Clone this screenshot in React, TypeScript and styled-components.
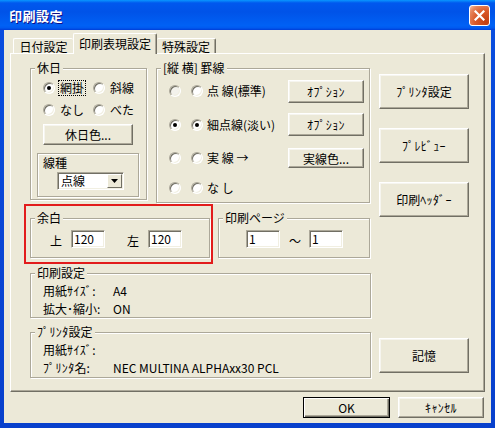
import React from 'react';
import styled, { createGlobalStyle } from 'styled-components';

const Global = createGlobalStyle`
  html, body { margin: 0; padding: 0; background: #fff; }
  body { font-family: "Noto Sans CJK JP", "Noto Sans", sans-serif; font-size: 12px; color: #000; }
  * { box-sizing: border-box; }
`;

const FACE = '#ECE9D8';

const Window = styled.div`
  width: 495px;
  height: 428px;
  display: flex;
  flex-direction: column;
  background: linear-gradient(180deg, #0A4EE0, #0840CC);
`;

const TitleBar = styled.div`
  height: 30px;
  flex: none;
  display: flex;
  align-items: center;
  padding: 0 5px 0 9px;
  background: linear-gradient(180deg, #0997ff 0%, #0058ee 10%, #0053e8 40%, #0061f5 85%, #005af0 93%, #003dd7 100%);
`;

const Title = styled.div`
  flex: 1;
  color: #fff;
  font-weight: bold;
  font-size: 13px;
  letter-spacing: 0.5px;
  text-shadow: 1px 1px 0 #0f1089;
`;

const CloseBtn = styled.div`
  width: 21px;
  height: 21px;
  border: 1px solid #fff;
  border-radius: 3px;
  display: flex;
  align-items: center;
  justify-content: center;
  background: radial-gradient(circle at 85% 85%, #c23e10 0%, #da5a2a 50%, #e6865e 80%, #f7c3a8 100%);
`;

const Client = styled.div`
  flex: 1;
  margin: 0 4px 5px 4px;
  background: ${FACE};
  display: flex;
  flex-direction: column;
  padding-top: 3px;
`;

const TabStrip = styled.div`
  display: flex;
  align-items: flex-end;
  height: 20px;
  padding-left: 9px;
`;

const Tab = styled.div<{ $w: number; $active?: boolean; $first?: boolean; $last?: boolean }>`
  width: ${p => p.$w}px;
  height: ${p => (p.$active ? 21 : 15)}px;
  margin-bottom: ${p => (p.$active ? -1 : 0)}px;
  position: relative;
  z-index: ${p => (p.$active ? 1 : 0)};
  background: ${FACE};
  display: flex;
  align-items: center;
  justify-content: center;
  padding-top: ${p => (p.$active ? 0 : 1)}px;
  padding-bottom: ${p => (p.$active ? 2 : 0)}px;
  border-top: 1px solid #fff;
  border-left: ${p => (p.$active || p.$first ? '1px solid #fff' : 'none')};
  border-right: ${p => (p.$active || p.$last ? '1px solid #716F64' : 'none')};
  box-shadow: ${p => (p.$active || p.$last ? 'inset -1px 0 0 #ACA899' : 'none')};
  border-radius: 2px 2px 0 0;
  white-space: nowrap;
`;

const Panel = styled.div`
  margin-left: 6px;
  width: 475px;
  height: 339px;
  flex: none;
  border-top: 1px solid #fff;
  border-left: 1px solid #fff;
  border-right: 1px solid #716F64;
  border-bottom: 1px solid #716F64;
  box-shadow: inset -1px -1px 0 #ACA899;
  display: flex;
  padding: 14px 0 0 13px;
`;

const LeftCol = styled.div`
  width: 347px;
  display: flex;
  flex-direction: column;
`;

const RightCol = styled.div`
  margin-left: 8px;
  width: 90px;
  display: flex;
  flex-direction: column;
  padding-top: 6px;
`;

const Row = styled.div<{ $mt?: number }>`
  display: flex;
  align-items: flex-start;
  margin-top: ${p => p.$mt ?? 0}px;
`;

const Group = styled.div<{ $w: number; $h: number; $ml?: number; $mt?: number; $pad?: string }>`
  position: relative;
  width: ${p => p.$w}px;
  height: ${p => p.$h}px;
  margin-left: ${p => p.$ml ?? 0}px;
  margin-top: ${p => p.$mt ?? 0}px;
  padding: ${p => p.$pad ?? '0'};
  border: 1px solid #ACA899;
  box-shadow: 1px 1px 0 #fff, inset 1px 1px 0 #fff;
  flex: none;
`;

const Legend = styled.span`
  position: absolute;
  top: -8px;
  left: 4px;
  padding: 0 2px;
  line-height: 14px;
  background: ${FACE};
  white-space: nowrap;
`;

const Hw = styled.span`
  letter-spacing: 0.4px;
`;

const Inner = styled.div`
  padding-left: 6px;
`;

const RadioRow = styled.div<{ $mt?: number }>`
  display: flex;
  align-items: center;
  height: 16px;
  margin-top: ${p => p.$mt ?? 0}px;
`;

const RadioItem = styled.div`
  width: 50px;
  display: flex;
  align-items: center;
  gap: 4px;
`;

const RadioCircle = styled.span<{ $checked?: boolean; $dim?: boolean; $ml?: number }>`
  width: 12px;
  height: 12px;
  flex: none;
  position: relative;
  margin-left: ${p => p.$ml ?? 0}px;
  border-radius: 50%;
  background: ${p => (p.$dim ? '#f3f2ec' : '#fff')};
  border: 1px solid;
  border-color: #ACA899 #fff #fff #ACA899;
  box-shadow: inset 1px 1px 0 #716F64, inset -1px -1px 0 #F1EFE2;
  &::after {
    content: '';
    display: ${p => (p.$checked ? 'block' : 'none')};
    position: absolute;
    left: 3px;
    top: 3px;
    width: 4px;
    height: 4px;
    border-radius: 50%;
    background: #000;
  }
`;

const RadioLabel = styled.span<{ $focus?: boolean }>`
  padding: 0 1px;
  line-height: 14px;
  white-space: nowrap;
  outline: ${p => (p.$focus ? '1px dotted #000' : 'none')};
`;

const Btn = styled.div<{ $w: number; $h: number; $mt?: number; $ml?: number; $default?: boolean }>`
  width: ${p => p.$w}px;
  height: ${p => p.$h}px;
  margin-top: ${p => p.$mt ?? 0}px;
  margin-left: ${p => p.$ml ?? 0}px;
  flex: none;
  background: ${FACE};
  display: flex;
  align-items: center;
  justify-content: center;
  white-space: nowrap;
  border: 1px solid;
  border-color: ${p => (p.$default ? '#000' : '#fff #716F64 #716F64 #fff')};
  box-shadow: ${p =>
    p.$default
      ? 'inset 1px 1px 0 #fff, inset -1px -1px 0 #716F64, inset -2px -2px 0 #ACA899'
      : 'inset -1px -1px 0 #ACA899, inset 1px 1px 0 #F6F5EF'};
`;

const LineTypeBox = styled.div`
  width: 102px;
  height: 44px;
  margin-top: 8px;
  padding: 2px 0 0 5px;
  border: 1px solid #ACA899;
  box-shadow: 1px 1px 0 #fff, inset 1px 1px 0 #fff;
`;

const BoxLabel = styled.div`
  line-height: 14px;
`;

const Combo = styled.div`
  width: 67px;
  height: 18px;
  margin: 2px 0 0 14px;
  display: flex;
  align-items: stretch;
  background: #fff;
  border: 1px solid;
  border-color: #ACA899 #fff #fff #ACA899;
  box-shadow: inset 1px 1px 0 #716F64, inset -1px -1px 0 #F1EFE2;
  padding: 1px;
`;

const ComboText = styled.span`
  flex: 1;
  padding-left: 2px;
  line-height: 14px;
`;

const DropBtn = styled.span`
  width: 15px;
  flex: none;
  background: ${FACE};
  display: flex;
  align-items: center;
  justify-content: center;
  border: 1px solid;
  border-color: #fff #716F64 #716F64 #fff;
`;

const KRow = styled.div<{ $h: number; $mt?: number }>`
  display: flex;
  align-items: center;
  height: ${p => p.$h}px;
  margin-top: ${p => p.$mt ?? 0}px;
`;

const KLabel = styled.span`
  flex: 1;
  margin-left: 4px;
  white-space: nowrap;
  line-height: 14px;
`;

const RedBox = styled.div`
  width: 189px;
  height: 60px;
  flex: none;
  border: 2px solid #E21C1C;
  padding: 12px 0 0 4px;
`;

const FieldRow = styled.div`
  display: flex;
  align-items: center;
  height: 18px;
`;

const FieldLabel = styled.span<{ $ml?: number }>`
  margin-left: ${p => p.$ml ?? 0}px;
  margin-right: 9px;
  line-height: 14px;
  padding-top: 3px;
`;

const TextBox = styled.div<{ $ml?: number }>`
  width: 34px;
  height: 18px;
  flex: none;
  margin-left: ${p => p.$ml ?? 0}px;
  background: #fff;
  border: 1px solid;
  border-color: #ACA899 #fff #fff #ACA899;
  box-shadow: inset 1px 1px 0 #716F64, inset -1px -1px 0 #F1EFE2;
  padding: 1px 0 0 2px;
  line-height: 14px;
`;

const Tilde = styled.span`
  width: 14px;
  margin-left: 8px;
  text-align: center;
  padding-top: 3px;
`;

const InfoRow = styled.div<{ $mt?: number }>`
  display: flex;
  align-items: center;
  height: 16px;
  margin-top: ${p => p.$mt ?? 0}px;
  white-space: nowrap;
`;

const InfoLabel = styled.span`
  width: 70px;
  flex: none;
`;

const BottomBar = styled.div`
  display: flex;
  justify-content: flex-end;
  margin-top: 5px;
  padding-right: 7px;
`;

const Arrow = () => (
  <svg width="7" height="4" viewBox="0 0 7 4">
    <path d="M0 0 H7 L3.5 4 Z" fill="#000" />
  </svg>
);

const CloseX = () => (
  <svg width="11" height="11" viewBox="0 0 11 11">
    <path d="M1.5 1.5 L9.5 9.5 M9.5 1.5 L1.5 9.5" stroke="#fff" strokeWidth="2.2" strokeLinecap="square" />
  </svg>
);

export default function App() {
  return (
    <>
      <Global />
      <Window>
        <TitleBar>
          <Title>印刷設定</Title>
          <CloseBtn>
            <CloseX />
          </CloseBtn>
        </TitleBar>
        <Client>
          <TabStrip>
            <Tab $w={60} $first>日付設定</Tab>
            <Tab $w={84} $active>印刷表現設定</Tab>
            <Tab $w={59} $last>特殊設定</Tab>
          </TabStrip>
          <Panel>
            <LeftCol>
              <Row>
                <Group $w={117} $h={132} $ml={6} $pad="11px 0 0 6px">
                  <Legend>休日</Legend>
                  <Inner>
                    <RadioRow>
                      <RadioItem>
                        <RadioCircle $checked />
                        <RadioLabel $focus>網掛</RadioLabel>
                      </RadioItem>
                      <RadioItem>
                        <RadioCircle />
                        <RadioLabel>斜線</RadioLabel>
                      </RadioItem>
                    </RadioRow>
                    <RadioRow $mt={6}>
                      <RadioItem>
                        <RadioCircle />
                        <RadioLabel>なし</RadioLabel>
                      </RadioItem>
                      <RadioItem>
                        <RadioCircle />
                        <RadioLabel>べた</RadioLabel>
                      </RadioItem>
                    </RadioRow>
                    <Btn $w={90} $h={21} $mt={6}>休日色...</Btn>
                  </Inner>
                  <LineTypeBox>
                    <BoxLabel>線種</BoxLabel>
                    <Combo>
                      <ComboText>点線</ComboText>
                      <DropBtn>
                        <Arrow />
                      </DropBtn>
                    </Combo>
                  </LineTypeBox>
                </Group>
                <Group $w={214} $h={135} $ml={9} $pad="10px 5px 0 12px">
                  <Legend>[縦 横] 罫線</Legend>
                  <KRow $h={24}>
                    <RadioCircle $dim />
                    <RadioCircle $ml={10} />
                    <KLabel>点 線(標準)</KLabel>
                    <Btn $w={76} $h={23}><Hw>ｵﾌﾟｼｮﾝ</Hw></Btn>
                  </KRow>
                  <KRow $h={23} $mt={10}>
                    <RadioCircle $checked />
                    <RadioCircle $checked $ml={10} />
                    <KLabel>細点線(淡い)</KLabel>
                    <Btn $w={76} $h={23}><Hw>ｵﾌﾟｼｮﾝ</Hw></Btn>
                  </KRow>
                  <KRow $h={20} $mt={12}>
                    <RadioCircle />
                    <RadioCircle $ml={10} />
                    <KLabel>実 線 →</KLabel>
                    <Btn $w={76} $h={20}>実線色...</Btn>
                  </KRow>
                  <KRow $h={16} $mt={12}>
                    <RadioCircle />
                    <RadioCircle $ml={10} />
                    <KLabel>な し</KLabel>
                  </KRow>
                </Group>
              </Row>
              <Row $mt={1}>
                <RedBox>
                  <Group $w={180} $h={40} $pad="11px 0 0 19px">
                    <Legend>余白</Legend>
                    <FieldRow>
                      <FieldLabel>上</FieldLabel>
                      <TextBox>120</TextBox>
                      <FieldLabel $ml={22}>左</FieldLabel>
                      <TextBox>120</TextBox>
                    </FieldRow>
                  </Group>
                </RedBox>
                <Group $w={152} $h={40} $ml={5} $mt={14} $pad="11px 0 0 27px">
                  <Legend>印刷ページ</Legend>
                  <FieldRow>
                    <TextBox>1</TextBox>
                    <Tilde>～</Tilde>
                    <TextBox $ml={7}>1</TextBox>
                  </FieldRow>
                </Group>
              </Row>
              <Group $w={341} $h={45} $ml={6} $mt={9} $pad="8px 0 0 12px">
                <Legend>印刷設定</Legend>
                <InfoRow>
                  <InfoLabel>用紙<Hw>ｻｲｽﾞ</Hw>:</InfoLabel>
                  <span>A4</span>
                </InfoRow>
                <InfoRow $mt={2}>
                  <InfoLabel>拡大･縮小:</InfoLabel>
                  <span>ON</span>
                </InfoRow>
              </Group>
              <Group $w={341} $h={46} $ml={6} $mt={14} $pad="8px 0 0 12px">
                <Legend><Hw>ﾌﾟﾘﾝﾀ</Hw>設定</Legend>
                <InfoRow>
                  <InfoLabel>用紙<Hw>ｻｲｽﾞ</Hw>:</InfoLabel>
                </InfoRow>
                <InfoRow $mt={2}>
                  <InfoLabel><Hw>ﾌﾟﾘﾝﾀ</Hw>名:</InfoLabel>
                  <span>NEC MULTINA ALPHAxx30 PCL</span>
                </InfoRow>
              </Group>
            </LeftCol>
            <RightCol>
              <Btn $w={90} $h={35}><Hw>ﾌﾟﾘﾝﾀ</Hw>設定</Btn>
              <Btn $w={90} $h={35} $mt={19}><Hw>ﾌﾟﾚﾋﾞｭｰ</Hw></Btn>
              <Btn $w={90} $h={35} $mt={19}>印刷<Hw>ﾍｯﾀﾞｰ</Hw></Btn>
              <Btn $w={90} $h={35} $mt={121}>記憶</Btn>
            </RightCol>
          </Panel>
          <BottomBar>
            <Btn $w={87} $h={21} $default>OK</Btn>
            <Btn $w={86} $h={21} $ml={8}><Hw>ｷｬﾝｾﾙ</Hw></Btn>
          </BottomBar>
        </Client>
      </Window>
    </>
  );
}
